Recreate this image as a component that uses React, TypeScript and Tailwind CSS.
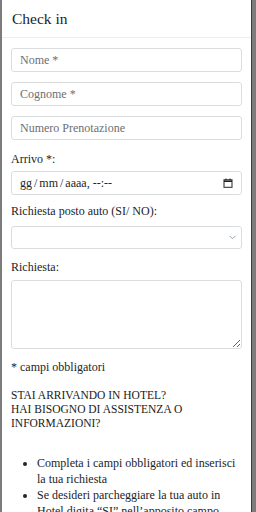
import React from "react";

const serif = { fontFamily: '"Liberation Serif", "Times New Roman", serif' };

function Field({ placeholder }: { placeholder: string }) {
  return (
    <input
      type="text"
      placeholder={placeholder}
      className="block h-[24px] w-full rounded-[3px] border border-[#dadde0] bg-white px-[8px] text-[12px] text-[#212529] placeholder:text-[#6c6f73] outline-none"
      style={serif}
    />
  );
}

function Label({ children, className = "" }: { children: React.ReactNode; className?: string }) {
  return <p className={`text-[12px] leading-[16px] text-[#212529] ${className}`}>{children}</p>;
}

export default function App() {
  return (
    <div className="flex h-[512px] w-[256px] overflow-hidden bg-[#7c7c7c]" style={serif}>
      <div className="ml-[2px] h-full w-[250px] border-r border-[#3d3d3d] bg-white">
        <div className="flex h-[38px] items-center border-b border-[#ebedef] px-[10px]">
          <h1 className="text-[15.5px] leading-[20px] text-[#212529]">Check in</h1>
        </div>
        <div className="px-[9px]">
          <div className="mt-[10px] flex flex-col gap-[10px]">
            <Field placeholder="Nome *" />
            <Field placeholder="Cognome *" />
            <Field placeholder="Numero Prenotazione" />
          </div>

          <Label className="mt-[11px]">Arrivo *:</Label>
          <div className="mt-[4px] flex h-[24px] items-center justify-between rounded-[3px] border border-[#dadde0] pl-[8px] pr-[8px] text-[12px] text-[#212529]">
            <span>
              gg<span className="mx-[2px]">/</span>mm<span className="mx-[2px]">/</span>aaaa, --:--
            </span>
            <svg width="10" height="10" viewBox="0 0 10 10" fill="none" stroke="#222" strokeWidth="1">
              <rect x="1" y="1.8" width="8" height="7.5" />
              <line x1="1" y1="3.2" x2="9" y2="3.2" strokeWidth="1.6" />
              <line x1="3" y1="0.5" x2="3" y2="2" />
              <line x1="7" y1="0.5" x2="7" y2="2" />
            </svg>
          </div>

          <Label className="mt-[8px]">Richiesta posto auto (SI/ NO):</Label>
          <div className="mt-[7px] flex h-[23px] items-center justify-end rounded-[3px] border border-[#dadde0] pr-[5px]">
            <svg width="7" height="5" viewBox="0 0 7 5" fill="none" stroke="#9aa0a6" strokeWidth="1">
              <path d="M0.8 1 L3.5 3.8 L6.2 1" />
            </svg>
          </div>

          <Label className="mt-[10px]">Richiesta:</Label>
          <textarea
            className="mt-[5px] block h-[69px] w-full resize-y rounded-[3px] border border-[#dadde0] outline-none"
            style={serif}
          />

          <Label className="mt-[10px]">* campi obbligatori</Label>

          <p className="mt-[13px] text-[11.5px] leading-[14px] text-[#1a1a1a]">
            STAI ARRIVANDO IN HOTEL?
            <br />
            HAI BISOGNO DI ASSISTENZA O INFORMAZIONI?
          </p>

          <ul className="mt-[25px] list-disc pl-[26px] text-[12px] leading-[16px] text-[#212529]">
            <li>Completa i campi obbligatori ed inserisci la tua richiesta</li>
            <li>Se desideri parcheggiare la tua auto in Hotel digita “SI” nell’apposito campo</li>
          </ul>
        </div>
      </div>
    </div>
  );
}
